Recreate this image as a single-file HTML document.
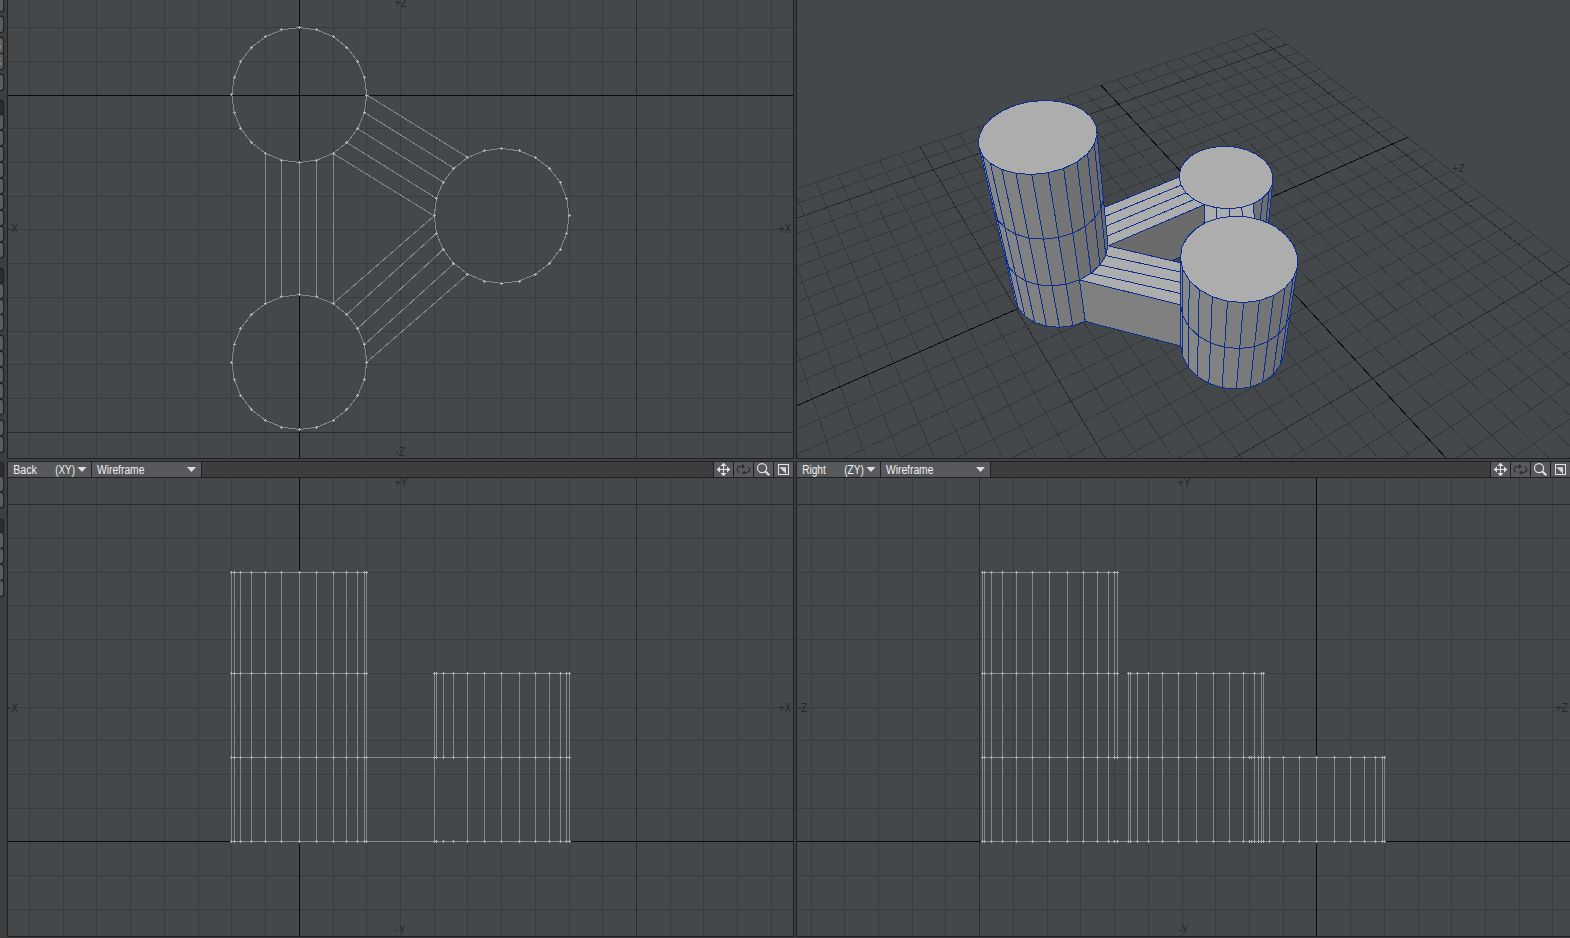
<!DOCTYPE html>
<html><head><meta charset="utf-8"><title>Modeler</title>
<style>
html,body{margin:0;padding:0;}
body{width:1570px;height:938px;overflow:hidden;position:relative;background:#3d3d3f;font-family:"Liberation Sans",sans-serif;}
#strip{position:absolute;left:0;top:0;width:7px;height:938px;background:#3d3e40;overflow:hidden}
</style></head><body>
<div id="strip"><div style="position:absolute;left:-3px;top:-5px;width:6.3px;height:16px;background:#5a5b5e;border-radius:0 2.2px 2.2px 0;box-shadow:0 0 0 1.25px #222324"></div><div style="position:absolute;left:-3px;top:17px;width:6.3px;height:15px;background:#5a5b5e;border-radius:0 2.2px 2.2px 0;box-shadow:0 0 0 1.25px #222324"></div><div style="position:absolute;left:-3px;top:38px;width:6.3px;height:15px;background:#5a5b5e;border-radius:0 2.2px 2.2px 0;box-shadow:0 0 0 1.25px #222324"></div><div style="position:absolute;left:-3px;top:54px;width:6.3px;height:15px;background:#5a5b5e;border-radius:0 2.2px 2.2px 0;box-shadow:0 0 0 1.25px #222324"></div><div style="position:absolute;left:-3px;top:75px;width:6.3px;height:15px;background:#5a5b5e;border-radius:0 2.2px 2.2px 0;box-shadow:0 0 0 1.25px #222324"></div><div style="position:absolute;left:-3px;top:115px;width:6.3px;height:14px;background:#5a5b5e;border-radius:0 2.2px 2.2px 0;box-shadow:0 0 0 1.25px #222324"></div><div style="position:absolute;left:-3px;top:131px;width:6.3px;height:14px;background:#5a5b5e;border-radius:0 2.2px 2.2px 0;box-shadow:0 0 0 1.25px #222324"></div><div style="position:absolute;left:-3px;top:147px;width:6.3px;height:14px;background:#5a5b5e;border-radius:0 2.2px 2.2px 0;box-shadow:0 0 0 1.25px #222324"></div><div style="position:absolute;left:-3px;top:163px;width:6.3px;height:14px;background:#5a5b5e;border-radius:0 2.2px 2.2px 0;box-shadow:0 0 0 1.25px #222324"></div><div style="position:absolute;left:-3px;top:179px;width:6.3px;height:14px;background:#5a5b5e;border-radius:0 2.2px 2.2px 0;box-shadow:0 0 0 1.25px #222324"></div><div style="position:absolute;left:-3px;top:195px;width:6.3px;height:14px;background:#5a5b5e;border-radius:0 2.2px 2.2px 0;box-shadow:0 0 0 1.25px #222324"></div><div style="position:absolute;left:-3px;top:211px;width:6.3px;height:14px;background:#5a5b5e;border-radius:0 2.2px 2.2px 0;box-shadow:0 0 0 1.25px #222324"></div><div style="position:absolute;left:-3px;top:227px;width:6.3px;height:14px;background:#5a5b5e;border-radius:0 2.2px 2.2px 0;box-shadow:0 0 0 1.25px #222324"></div><div style="position:absolute;left:-3px;top:243px;width:6.3px;height:14px;background:#5a5b5e;border-radius:0 2.2px 2.2px 0;box-shadow:0 0 0 1.25px #222324"></div><div style="position:absolute;left:-3px;top:284px;width:6.3px;height:14px;background:#5a5b5e;border-radius:0 2.2px 2.2px 0;box-shadow:0 0 0 1.25px #222324"></div><div style="position:absolute;left:-3px;top:300px;width:6.3px;height:14px;background:#5a5b5e;border-radius:0 2.2px 2.2px 0;box-shadow:0 0 0 1.25px #222324"></div><div style="position:absolute;left:-3px;top:315px;width:6.3px;height:15px;background:#5a5b5e;border-radius:0 2.2px 2.2px 0;box-shadow:0 0 0 1.25px #222324"></div><div style="position:absolute;left:-3px;top:336px;width:6.3px;height:14px;background:#5a5b5e;border-radius:0 2.2px 2.2px 0;box-shadow:0 0 0 1.25px #222324"></div><div style="position:absolute;left:-3px;top:352px;width:6.3px;height:14px;background:#5a5b5e;border-radius:0 2.2px 2.2px 0;box-shadow:0 0 0 1.25px #222324"></div><div style="position:absolute;left:-3px;top:368px;width:6.3px;height:14px;background:#5a5b5e;border-radius:0 2.2px 2.2px 0;box-shadow:0 0 0 1.25px #222324"></div><div style="position:absolute;left:-3px;top:384px;width:6.3px;height:14px;background:#5a5b5e;border-radius:0 2.2px 2.2px 0;box-shadow:0 0 0 1.25px #222324"></div><div style="position:absolute;left:-3px;top:400px;width:6.3px;height:14px;background:#5a5b5e;border-radius:0 2.2px 2.2px 0;box-shadow:0 0 0 1.25px #222324"></div><div style="position:absolute;left:-3px;top:421px;width:6.3px;height:14px;background:#5a5b5e;border-radius:0 2.2px 2.2px 0;box-shadow:0 0 0 1.25px #222324"></div><div style="position:absolute;left:-3px;top:437px;width:6.3px;height:15px;background:#5a5b5e;border-radius:0 2.2px 2.2px 0;box-shadow:0 0 0 1.25px #222324"></div><div style="position:absolute;left:-3px;top:477px;width:6.3px;height:14px;background:#5a5b5e;border-radius:0 2.2px 2.2px 0;box-shadow:0 0 0 1.25px #222324"></div><div style="position:absolute;left:-3px;top:493px;width:6.3px;height:14px;background:#5a5b5e;border-radius:0 2.2px 2.2px 0;box-shadow:0 0 0 1.25px #222324"></div><div style="position:absolute;left:-3px;top:533px;width:6.3px;height:15px;background:#5a5b5e;border-radius:0 2.2px 2.2px 0;box-shadow:0 0 0 1.25px #222324"></div><div style="position:absolute;left:-3px;top:549px;width:6.3px;height:14px;background:#5a5b5e;border-radius:0 2.2px 2.2px 0;box-shadow:0 0 0 1.25px #222324"></div><div style="position:absolute;left:-3px;top:565px;width:6.3px;height:15px;background:#5a5b5e;border-radius:0 2.2px 2.2px 0;box-shadow:0 0 0 1.25px #222324"></div><div style="position:absolute;left:-3px;top:581px;width:6.3px;height:15px;background:#5a5b5e;border-radius:0 2.2px 2.2px 0;box-shadow:0 0 0 1.25px #222324"></div><div style="position:absolute;left:-3px;top:101px;width:6.3px;height:13px;background:#2c2d2f;border-radius:0 2.2px 2.2px 0;box-shadow:0 0 0 1.25px #222324"></div><div style="position:absolute;left:-3px;top:269px;width:6.3px;height:14px;background:#2c2d2f;border-radius:0 2.2px 2.2px 0;box-shadow:0 0 0 1.25px #222324"></div><div style="position:absolute;left:-3px;top:463px;width:6.3px;height:13px;background:#2c2d2f;border-radius:0 2.2px 2.2px 0;box-shadow:0 0 0 1.25px #222324"></div><div style="position:absolute;left:-3px;top:520px;width:6.3px;height:12px;background:#2c2d2f;border-radius:0 2.2px 2.2px 0;box-shadow:0 0 0 1.25px #222324"></div><div style="position:absolute;left:0;top:41px;width:1.2px;height:1px;background:#9f7d5a"></div><div style="position:absolute;left:0;top:45px;width:1.2px;height:4px;background:#9f7d5a"></div><div style="position:absolute;left:0;top:58px;width:1.2px;height:1px;background:#9f7d5a"></div><div style="position:absolute;left:0;top:62px;width:1.2px;height:3px;background:#9f7d5a"></div></div>
<svg width="1570" height="938" viewBox="0 0 1570 938" style="position:absolute;left:0;top:0"><defs><clipPath id="c0"><rect x="8" y="0" width="785" height="458"/></clipPath><clipPath id="c1"><rect x="797" y="0" width="773" height="458"/></clipPath><clipPath id="c2"><rect x="8" y="478" width="785" height="458"/></clipPath><clipPath id="c3"><rect x="797" y="478" width="773" height="458"/></clipPath></defs><rect x="8" y="0" width="785" height="458" fill="#45484b"/><rect x="797" y="0" width="773" height="458" fill="#45484b"/><rect x="8" y="478" width="785" height="458" fill="#45484b"/><rect x="797" y="478" width="773" height="458" fill="#45484b"/><g clip-path="url(#c0)"><path d="M29.5 0V458M63.5 0V458M96.5 0V458M130.5 0V458M164.5 0V458M198.5 0V458M231.5 0V458M265.5 0V458M333.5 0V458M366.5 0V458M400.5 0V458M434.5 0V458M467.5 0V458M501.5 0V458M535.5 0V458M569.5 0V458M602.5 0V458M670.5 0V458M703.5 0V458M737.5 0V458M771.5 0V458M8 27.5H793M8 61.5H793M8 128.5H793M8 162.5H793M8 196.5H793M8 229.5H793M8 263.5H793M8 297.5H793M8 331.5H793M8 364.5H793M8 398.5H793" stroke="#393b3d" stroke-width="1" fill="none" shape-rendering="crispEdges"/><path d="M636.5 0V458M8 432.5H793" stroke="#2a2b2d" stroke-width="1" fill="none" shape-rendering="crispEdges"/><path d="M299.5 0V458M8 95.5H793" stroke="#0c0c0c" stroke-width="1" fill="none" shape-rendering="crispEdges"/><text x="394.74" y="7.4" textLength="12.32" lengthAdjust="spacingAndGlyphs" font-family="Liberation Sans, sans-serif" font-size="12" fill="#27282a">+Z</text><text x="395.43" y="455.8" textLength="9.74" lengthAdjust="spacingAndGlyphs" font-family="Liberation Sans, sans-serif" font-size="12" fill="#27282a">-Z</text><text x="7.84" y="233" textLength="10.32" lengthAdjust="spacingAndGlyphs" font-family="Liberation Sans, sans-serif" font-size="12" fill="#27282a">-X</text><text x="778.55" y="233" textLength="12.90" lengthAdjust="spacingAndGlyphs" font-family="Liberation Sans, sans-serif" font-size="12" fill="#27282a">+X</text><path d="M366.74 362.06L364.44 344.61M364.44 344.61L357.7 328.34M357.7 328.34L346.99 314.38M346.99 314.38L333.02 303.66M333.02 303.66L316.75 296.92M316.75 296.92L299.3 294.62M299.3 294.62L281.85 296.92M281.85 296.92L265.58 303.66M265.58 303.66L251.61 314.38M251.61 314.38L240.9 328.34M240.9 328.34L234.16 344.61M234.16 344.61L231.86 362.06M231.86 362.06L234.16 379.52M234.16 379.52L240.9 395.78M240.9 395.78L251.61 409.75M251.61 409.75L265.58 420.47M265.58 420.47L281.85 427.2M281.85 427.2L299.3 429.5M299.3 429.5L316.75 427.2M316.75 427.2L333.02 420.47M333.02 420.47L346.99 409.75M346.99 409.75L357.7 395.78M357.7 395.78L364.44 379.52M364.44 379.52L366.74 362.06M366.74 95L364.44 77.55M364.44 77.55L357.7 61.28M357.7 61.28L346.99 47.31M346.99 47.31L333.02 36.6M333.02 36.6L316.75 29.86M316.75 29.86L299.3 27.56M299.3 27.56L281.85 29.86M281.85 29.86L265.58 36.6M265.58 36.6L251.61 47.31M251.61 47.31L240.9 61.28M240.9 61.28L234.16 77.55M234.16 77.55L231.86 95M231.86 95L234.16 112.45M234.16 112.45L240.9 128.72M240.9 128.72L251.61 142.69M251.61 142.69L265.58 153.4M265.58 153.4L281.85 160.14M281.85 160.14L299.3 162.44M299.3 162.44L316.75 160.14M316.75 160.14L333.02 153.4M333.02 153.4L346.99 142.69M346.99 142.69L357.7 128.72M357.7 128.72L364.44 112.45M364.44 112.45L366.74 95M569.06 215.89L566.76 198.43M566.76 198.43L560.02 182.17M560.02 182.17L549.31 168.2M549.31 168.2L535.34 157.48M535.34 157.48L519.07 150.74M519.07 150.74L501.62 148.45M501.62 148.45L484.17 150.74M484.17 150.74L467.9 157.48M467.9 157.48L453.93 168.2M453.93 168.2L443.22 182.17M443.22 182.17L436.48 198.43M436.48 198.43L434.18 215.89M434.18 215.89L436.48 233.34M436.48 233.34L443.22 249.61M443.22 249.61L453.93 263.57M453.93 263.57L467.9 274.29M467.9 274.29L484.17 281.03M484.17 281.03L501.62 283.33M501.62 283.33L519.07 281.03M519.07 281.03L535.34 274.29M535.34 274.29L549.31 263.57M549.31 263.57L560.02 249.61M560.02 249.61L566.76 233.34M566.76 233.34L569.06 215.89M265.5 153.5L265.5 303.5M333.02 153.4L434.18 215.89M333.02 303.66L434.18 215.89M281.5 160.5L281.5 296.5M346.99 142.69L436.48 198.43M346.99 314.38L436.48 233.34M299.5 162.5L299.5 294.5M357.7 128.72L443.22 182.17M357.7 328.34L443.22 249.61M316.5 160.5L316.5 296.5M364.44 112.45L453.93 168.2M364.44 344.61L453.93 263.57M333.5 153.5L333.5 303.5M366.74 95L467.9 157.48M366.74 362.06L467.9 274.29" stroke="#858585" stroke-width="1" fill="none" shape-rendering="crispEdges"/><path d="M365.0 362.5h3M366.5 361.0v3M363.0 344.5h3M364.5 343.0v3M356.0 328.5h3M357.5 327.0v3M345.0 314.5h3M346.5 313.0v3M332.0 303.5h3M333.5 302.0v3M315.0 296.5h3M316.5 295.0v3M298.0 294.5h3M299.5 293.0v3M280.0 296.5h3M281.5 295.0v3M264.0 303.5h3M265.5 302.0v3M250.0 314.5h3M251.5 313.0v3M239.0 328.5h3M240.5 327.0v3M233.0 344.5h3M234.5 343.0v3M230.0 362.5h3M231.5 361.0v3M233.0 379.5h3M234.5 378.0v3M239.0 395.5h3M240.5 394.0v3M250.0 409.5h3M251.5 408.0v3M264.0 420.5h3M265.5 419.0v3M280.0 427.5h3M281.5 426.0v3M298.0 429.5h3M299.5 428.0v3M315.0 427.5h3M316.5 426.0v3M332.0 420.5h3M333.5 419.0v3M345.0 409.5h3M346.5 408.0v3M356.0 395.5h3M357.5 394.0v3M363.0 379.5h3M364.5 378.0v3M365.0 95.5h3M366.5 94.0v3M363.0 77.5h3M364.5 76.0v3M356.0 61.5h3M357.5 60.0v3M345.0 47.5h3M346.5 46.0v3M332.0 36.5h3M333.5 35.0v3M315.0 29.5h3M316.5 28.0v3M298.0 27.5h3M299.5 26.0v3M280.0 29.5h3M281.5 28.0v3M264.0 36.5h3M265.5 35.0v3M250.0 47.5h3M251.5 46.0v3M239.0 61.5h3M240.5 60.0v3M233.0 77.5h3M234.5 76.0v3M230.0 94.5h3M231.5 93.0v3M233.0 112.5h3M234.5 111.0v3M239.0 128.5h3M240.5 127.0v3M250.0 142.5h3M251.5 141.0v3M264.0 153.5h3M265.5 152.0v3M280.0 160.5h3M281.5 159.0v3M298.0 162.5h3M299.5 161.0v3M315.0 160.5h3M316.5 159.0v3M332.0 153.5h3M333.5 152.0v3M345.0 142.5h3M346.5 141.0v3M356.0 128.5h3M357.5 127.0v3M363.0 112.5h3M364.5 111.0v3M568.0 215.5h3M569.5 214.0v3M565.0 198.5h3M566.5 197.0v3M559.0 182.5h3M560.5 181.0v3M548.0 168.5h3M549.5 167.0v3M534.0 157.5h3M535.5 156.0v3M518.0 150.5h3M519.5 149.0v3M500.0 148.5h3M501.5 147.0v3M483.0 150.5h3M484.5 149.0v3M466.0 157.5h3M467.5 156.0v3M452.0 168.5h3M453.5 167.0v3M442.0 182.5h3M443.5 181.0v3M435.0 198.5h3M436.5 197.0v3M433.0 215.5h3M434.5 214.0v3M435.0 233.5h3M436.5 232.0v3M442.0 249.5h3M443.5 248.0v3M452.0 263.5h3M453.5 262.0v3M466.0 274.5h3M467.5 273.0v3M483.0 281.5h3M484.5 280.0v3M500.0 283.5h3M501.5 282.0v3M518.0 281.5h3M519.5 280.0v3M534.0 274.5h3M535.5 273.0v3M548.0 263.5h3M549.5 262.0v3M559.0 249.5h3M560.5 248.0v3M565.0 233.5h3M566.5 232.0v3" stroke="#b0b0b0" stroke-width="1" fill="none" shape-rendering="crispEdges"/></g><g clip-path="url(#c1)"><g fill="none" stroke-width="1" shape-rendering="crispEdges"><path d="M432.53 313.53L1266.89 28.26M431.37 330.61L1276.95 36.05M428.9 366.8L1297.86 52.26M427.59 386.01L1308.74 60.7M426.23 406.03L1319.92 69.36M424.8 426.89L1331.41 78.27M423.32 448.67L1343.22 87.42M421.77 471.42L1355.37 96.84M420.15 495.2L1367.88 106.53M418.45 520.1L1380.75 116.51M416.68 546.18L1394 126.78M412.86 602.28L1421.73 148.28M410.8 632.5L1436.25 159.53M408.63 664.31L1451.23 171.14M406.34 697.84L1466.69 183.12M403.93 733.25L1482.66 195.5M401.38 770.69L1499.16 208.29M398.68 810.34L1516.22 221.51M395.81 852.41L1533.87 235.19M392.77 897.11L1552.14 249.35M386.06 995.51L1590.66 279.22M382.36 1049.82L1611 294.98M378.4 1108.03L1632.1 311.33M374.14 1170.58L1654.02 328.32M369.55 1237.96L1676.79 345.97M364.58 1310.77L1700.48 364.33M359.21 1389.68L1725.13 383.44M353.36 1475.5L1750.81 403.34M346.98 1569.17L1777.58 424.09M332.29 1784.82L1834.7 468.36M323.77 1909.8L1865.2 492.01M462.21 303.39L408.72 1831.67M491.22 293.47L488.48 1758.31M519.58 283.77L563.51 1689.29M547.31 274.29L634.23 1624.25M574.43 265.02L700.99 1562.84M600.97 255.94L764.12 1504.77M626.93 247.07L823.9 1449.78M652.35 238.38L880.6 1397.63M677.23 229.87L934.45 1348.1M725.45 213.38L1034.41 1256.16M748.83 205.39L1080.89 1213.41M771.73 197.56L1125.24 1172.62M794.18 189.88L1167.61 1133.65M816.19 182.36L1208.12 1096.38M837.76 174.98L1246.91 1060.71M858.92 167.75L1284.07 1026.53M879.67 160.66L1319.7 993.75M900.02 153.7L1353.91 962.29M939.6 140.17L1418.35 903.02M958.83 133.59L1448.74 875.07M977.72 127.13L1477.99 848.16M996.26 120.79L1506.18 822.23M1014.47 114.57L1533.36 797.23M1032.36 108.45L1559.58 773.11M1049.93 102.44L1584.9 749.83M1067.19 96.54L1609.35 727.34M1084.15 90.74L1632.98 705.6M1117.2 79.44L1677.95 664.24M1133.31 73.93L1699.36 644.55M1149.15 68.52L1720.1 625.47M1164.73 63.19L1740.2 606.99M1180.04 57.96L1759.68 589.06M1195.11 52.8L1778.59 571.67M1209.93 47.74L1796.93 554.8M1224.52 42.75L1814.74 538.42M1238.87 37.84L1832.05 522.5M1266.89 28.26L1865.2 492.01" stroke="#353739"/><path d="M430.16 348.35L1287.27 44.05M389.52 944.71L1571.06 264.02M339.99 1671.83L1805.52 445.75M432.53 313.53L323.77 1909.8M701.59 221.54L985.66 1301M920 146.87L1386.76 932.07M1252.99 33.01L1848.86 507.04" stroke="#28292b"/><path d="M1100.82 85.04L1655.83 684.58M414.81 573.55L1407.66 137.37" stroke="#0c0c0c"/></g><text x="1452" y="171.6" font-family="Liberation Sans, sans-serif" font-size="11" fill="#27282a">+Z</text><g stroke="#0a2f8c" stroke-width="1" stroke-linejoin="round" shape-rendering="crispEdges"><polygon points="1264.71,233.27 1268.13,225.43 1272.63,183.54 1269.07,191.36" fill="#6b6b6b"/><polygon points="1258.37,240.19 1264.71,233.27 1269.07,191.36 1262.43,198.28" fill="#6e6e6e"/><polygon points="1253.11,203.75 1262.43,198.28 1269.07,191.36 1272.63,183.54 1272.94,175.37 1270.1,167.44 1264.37,160.25 1256.22,154.24 1246.2,149.76 1234.97,147.06 1223.21,146.28 1211.63,147.45 1200.93,150.53 1191.79,155.34 1184.8,161.61 1180.46,168.99 1179.14,177.01 1181.04,185.16 1186.11,192.85 1194.09,199.51 1204.46,204.63 1216.47,207.78 1229.24,208.71 1241.77,207.32" fill="#adadad"/><polygon points="1249.51,245.66 1258.37,240.19 1262.43,198.28 1253.11,203.75" fill="#717171"/><polygon points="1179.14,177.01 1181.04,185.16 1094.9,220.57 1085.06,215.24" fill="#adadad"/><polygon points="1203.37,246.54 1204.46,204.63 1108.06,245.81 1112.17,287.59" fill="#6b6b6b"/><polygon points="1181.04,185.16 1186.11,192.85 1102.35,227.74 1094.9,220.57" fill="#adadad"/><polygon points="1203.37,246.54 1204.46,204.63 1205.87,268.74 1204.62,310.34" fill="#888888"/><polygon points="1186.11,192.85 1194.09,199.51 1106.87,236.32 1102.35,227.74" fill="#adadad"/><polygon points="1194.09,199.51 1204.46,204.63 1108.06,245.81 1106.87,236.32" fill="#adadad"/><polygon points="1241.77,207.32 1253.11,203.75 1258.54,267.7 1245.42,264.05" fill="#adadad"/><polygon points="1229.24,208.71 1241.77,207.32 1245.42,264.05 1231.73,262.99" fill="#adadad"/><polygon points="1216.47,207.78 1229.24,208.71 1231.73,262.99 1218.29,264.58" fill="#adadad"/><polygon points="1204.46,204.63 1216.47,207.78 1218.29,264.58 1205.87,268.74" fill="#adadad"/><polygon points="1108.06,245.81 1105.74,255.6 1195.26,275.25 1205.87,268.74" fill="#adadad"/><polygon points="1085.29,321.4 1079.41,279.91 1180.58,304.82 1180.75,346" fill="#808080"/><polygon points="1105.74,255.6 1099.95,265 1187.14,283.78 1195.26,275.25" fill="#adadad"/><polygon points="1099.95,265 1090.98,273.32 1182.1,293.84 1187.14,283.78" fill="#adadad"/><polygon points="1090.98,273.32 1079.41,279.91 1180.58,304.82 1182.1,293.84" fill="#adadad"/><polygon points="1014.85,299.23 1018.35,308.4 1008.61,266.78 1005,257.54" fill="#888888"/><polygon points="1018.35,308.4 1025.1,316.35 1015.67,274.8 1008.61,266.78" fill="#878787"/><polygon points="1025.1,316.35 1034.68,322.46 1025.75,280.98 1015.67,274.8" fill="#848484"/><polygon points="1034.68,322.46 1046.42,326.22 1038.16,284.78 1025.75,280.98" fill="#818181"/><polygon points="1046.42,326.22 1059.43,327.32 1051.95,285.9 1038.16,284.78" fill="#7e7e7e"/><polygon points="1072.73,325.67 1085.29,321.4 1079.41,279.91 1066.06,284.23" fill="#757575"/><polygon points="1059.43,327.32 1072.73,325.67 1066.06,284.23 1051.95,285.9" fill="#7a7a7a"/><polygon points="1005,257.54 1008.61,266.78 997.64,219.94 993.94,210.68" fill="#888888"/><polygon points="1105.74,255.6 1108.06,245.81 1103.46,198.94 1100.94,208.73" fill="#696969"/><polygon points="1008.61,266.78 1015.67,274.8 1005.04,228 997.64,219.94" fill="#878787"/><polygon points="1099.95,265 1105.74,255.6 1100.94,208.73 1094.72,218.16" fill="#6b6b6b"/><polygon points="1015.67,274.8 1025.75,280.98 1015.68,234.2 1005.04,228" fill="#848484"/><polygon points="1090.98,273.32 1099.95,265 1094.72,218.16 1085.13,226.51" fill="#6e6e6e"/><polygon points="1025.75,280.98 1038.16,284.78 1028.84,238.03 1015.68,234.2" fill="#818181"/><polygon points="1079.41,279.91 1090.98,273.32 1085.13,226.51 1072.77,233.13" fill="#717171"/><polygon points="1038.16,284.78 1051.95,285.9 1043.5,239.15 1028.84,238.03" fill="#7e7e7e"/><polygon points="1066.06,284.23 1079.41,279.91 1072.77,233.13 1058.54,237.47" fill="#757575"/><polygon points="1051.95,285.9 1066.06,284.23 1058.54,237.47 1043.5,239.15" fill="#7a7a7a"/><polygon points="993.94,210.68 997.64,219.94 982.52,155.35 978.72,146.16" fill="#888888"/><polygon points="1100.94,208.73 1103.46,198.94 1097.13,134.54 1094.32,144.23" fill="#696969"/><polygon points="997.64,219.94 1005.04,228 990.36,163.36 982.52,155.35" fill="#878787"/><polygon points="1094.72,218.16 1100.94,208.73 1094.32,144.23 1087.51,153.58" fill="#6b6b6b"/><polygon points="1005.04,228 1015.68,234.2 1001.77,169.53 990.36,163.36" fill="#848484"/><polygon points="1063.6,168.47 1077.05,161.88 1087.51,153.58 1094.32,144.23 1097.13,134.54 1095.91,125.17 1090.89,116.72 1082.52,109.69 1071.4,104.47 1058.28,101.32 1043.92,100.41 1029.19,101.78 1014.93,105.36 1002.01,110.97 991.25,118.31 983.39,126.99 979.07,136.48 978.72,146.16 982.52,155.35 990.36,163.36 1001.77,169.53 1015.94,173.35 1031.81,174.47 1048.13,172.79" fill="#adadad"/><polygon points="1085.13,226.51 1094.72,218.16 1087.51,153.58 1077.05,161.88" fill="#6e6e6e"/><polygon points="1015.68,234.2 1028.84,238.03 1015.94,173.35 1001.77,169.53" fill="#818181"/><polygon points="1072.77,233.13 1085.13,226.51 1077.05,161.88 1063.6,168.47" fill="#717171"/><polygon points="1028.84,238.03 1043.5,239.15 1031.81,174.47 1015.94,173.35" fill="#7e7e7e"/><polygon points="1058.54,237.47 1072.77,233.13 1063.6,168.47 1048.13,172.79" fill="#757575"/><polygon points="1043.5,239.15 1058.54,237.47 1048.13,172.79 1031.81,174.47" fill="#7a7a7a"/><polygon points="1180.75,346 1182.86,357.02 1182.82,316 1180.58,304.82" fill="#888888"/><polygon points="1280.14,365.44 1283.94,354.83 1290.2,313.77 1286.23,324.55" fill="#6b6b6b"/><polygon points="1182.86,357.02 1188.49,367.45 1188.8,326.59 1182.82,316" fill="#888888"/><polygon points="1272.9,374.83 1280.14,365.44 1286.23,324.55 1278.6,334.11" fill="#6e6e6e"/><polygon points="1188.49,367.45 1197.34,376.51 1198.22,335.81 1188.8,326.59" fill="#878787"/><polygon points="1262.67,382.27 1272.9,374.83 1278.6,334.11 1267.76,341.68" fill="#717171"/><polygon points="1197.34,376.51 1208.83,383.47 1210.46,342.91 1198.22,335.81" fill="#848484"/><polygon points="1250.16,387.14 1262.67,382.27 1267.76,341.68 1254.47,346.65" fill="#757575"/><polygon points="1208.83,383.47 1222.16,387.77 1224.66,347.29 1210.46,342.91" fill="#818181"/><polygon points="1236.3,389.03 1250.16,387.14 1254.47,346.65 1239.72,348.57" fill="#7a7a7a"/><polygon points="1222.16,387.77 1236.3,389.03 1239.72,348.57 1224.66,347.29" fill="#7e7e7e"/><polygon points="1180.58,304.82 1182.82,316 1182.77,269.51 1180.39,258.22" fill="#888888"/><polygon points="1286.23,324.55 1290.2,313.77 1297.29,267.26 1293.15,278.16" fill="#6b6b6b"/><polygon points="1182.82,316 1188.8,326.59 1189.16,280.23 1182.77,269.51" fill="#888888"/><polygon points="1278.6,334.11 1286.23,324.55 1293.15,278.16 1285.08,287.84" fill="#6e6e6e"/><polygon points="1188.8,326.59 1198.22,335.81 1199.22,289.56 1189.16,280.23" fill="#878787"/><polygon points="1267.76,341.68 1278.6,334.11 1285.08,287.84 1273.55,295.52" fill="#717171"/><polygon points="1273.55,295.52 1285.08,287.84 1293.15,278.16 1297.29,267.26 1297.35,255.95 1293.48,245.02 1286.1,235.16 1275.78,226.96 1263.25,220.87 1249.29,217.2 1234.74,216.14 1220.46,217.73 1207.28,221.91 1196,228.45 1187.37,237.02 1182.01,247.15 1180.39,258.22 1182.77,269.51 1189.16,280.23 1199.22,289.56 1212.32,296.76 1227.5,301.21 1243.61,302.51 1259.37,300.56" fill="#adadad"/><polygon points="1198.22,335.81 1210.46,342.91 1212.32,296.76 1199.22,289.56" fill="#848484"/><polygon points="1254.47,346.65 1267.76,341.68 1273.55,295.52 1259.37,300.56" fill="#757575"/><polygon points="1210.46,342.91 1224.66,347.29 1227.5,301.21 1212.32,296.76" fill="#818181"/><polygon points="1239.72,348.57 1254.47,346.65 1259.37,300.56 1243.61,302.51" fill="#7a7a7a"/><polygon points="1224.66,347.29 1239.72,348.57 1243.61,302.51 1227.5,301.21" fill="#7e7e7e"/></g></g><g clip-path="url(#c2)"><path d="M29.5 478V936M63.5 478V936M96.5 478V936M130.5 478V936M164.5 478V936M198.5 478V936M231.5 478V936M265.5 478V936M333.5 478V936M366.5 478V936M400.5 478V936M434.5 478V936M467.5 478V936M501.5 478V936M535.5 478V936M569.5 478V936M602.5 478V936M670.5 478V936M703.5 478V936M737.5 478V936M771.5 478V936M8 538.5H793M8 572.5H793M8 605.5H793M8 639.5H793M8 673.5H793M8 707.5H793M8 740.5H793M8 774.5H793M8 808.5H793M8 875.5H793M8 909.5H793" stroke="#393b3d" stroke-width="1" fill="none" shape-rendering="crispEdges"/><path d="M636.5 478V936M8 504.5H793" stroke="#2a2b2d" stroke-width="1" fill="none" shape-rendering="crispEdges"/><path d="M299.5 478V936M8 841.5H793" stroke="#0c0c0c" stroke-width="1" fill="none" shape-rendering="crispEdges"/><text x="394.65" y="487.0" textLength="12.90" lengthAdjust="spacingAndGlyphs" font-family="Liberation Sans, sans-serif" font-size="12" fill="#27282a">+Y</text><text x="395.34" y="934" textLength="10.32" lengthAdjust="spacingAndGlyphs" font-family="Liberation Sans, sans-serif" font-size="12" fill="#27282a">-Y</text><text x="7.84" y="712" textLength="10.32" lengthAdjust="spacingAndGlyphs" font-family="Liberation Sans, sans-serif" font-size="12" fill="#27282a">-X</text><text x="778.55" y="712" textLength="12.90" lengthAdjust="spacingAndGlyphs" font-family="Liberation Sans, sans-serif" font-size="12" fill="#27282a">+X</text><path d="M366.5 841.5L364.5 841.5M364.5 841.5L357.5 841.5M357.5 841.5L346.5 841.5M346.5 841.5L333.5 841.5M333.5 841.5L316.5 841.5M316.5 841.5L299.5 841.5M299.5 841.5L281.5 841.5M281.5 841.5L265.5 841.5M265.5 841.5L251.5 841.5M251.5 841.5L240.5 841.5M240.5 841.5L234.5 841.5M234.5 841.5L231.5 841.5M366.5 757.5L364.5 757.5M364.5 757.5L357.5 757.5M357.5 757.5L346.5 757.5M346.5 757.5L333.5 757.5M333.5 757.5L316.5 757.5M316.5 757.5L299.5 757.5M299.5 757.5L281.5 757.5M281.5 757.5L265.5 757.5M265.5 757.5L251.5 757.5M251.5 757.5L240.5 757.5M240.5 757.5L234.5 757.5M234.5 757.5L231.5 757.5M366.5 673.5L364.5 673.5M364.5 673.5L357.5 673.5M357.5 673.5L346.5 673.5M346.5 673.5L333.5 673.5M333.5 673.5L316.5 673.5M316.5 673.5L299.5 673.5M299.5 673.5L281.5 673.5M281.5 673.5L265.5 673.5M265.5 673.5L251.5 673.5M251.5 673.5L240.5 673.5M240.5 673.5L234.5 673.5M234.5 673.5L231.5 673.5M366.5 572.5L364.5 572.5M364.5 572.5L357.5 572.5M357.5 572.5L346.5 572.5M346.5 572.5L333.5 572.5M333.5 572.5L316.5 572.5M316.5 572.5L299.5 572.5M299.5 572.5L281.5 572.5M281.5 572.5L265.5 572.5M265.5 572.5L251.5 572.5M251.5 572.5L240.5 572.5M240.5 572.5L234.5 572.5M234.5 572.5L231.5 572.5M366.5 841.5L366.5 757.5M366.5 757.5L366.5 673.5M366.5 673.5L366.5 572.5M364.5 757.5L364.5 673.5M364.5 673.5L364.5 572.5M357.5 757.5L357.5 673.5M357.5 673.5L357.5 572.5M346.5 757.5L346.5 673.5M346.5 673.5L346.5 572.5M333.5 841.5L333.5 757.5M333.5 757.5L333.5 673.5M333.5 673.5L333.5 572.5M316.5 757.5L316.5 673.5M316.5 673.5L316.5 572.5M299.5 757.5L299.5 673.5M299.5 673.5L299.5 572.5M281.5 757.5L281.5 673.5M281.5 673.5L281.5 572.5M265.5 841.5L265.5 757.5M265.5 757.5L265.5 673.5M265.5 673.5L265.5 572.5M251.5 841.5L251.5 757.5M251.5 757.5L251.5 673.5M251.5 673.5L251.5 572.5M240.5 841.5L240.5 757.5M240.5 757.5L240.5 673.5M240.5 673.5L240.5 572.5M234.5 841.5L234.5 757.5M234.5 757.5L234.5 673.5M234.5 673.5L234.5 572.5M231.5 841.5L231.5 757.5M231.5 757.5L231.5 673.5M231.5 673.5L231.5 572.5M281.5 841.5L281.5 757.5M299.5 841.5L299.5 757.5M316.5 841.5L316.5 757.5M346.5 841.5L346.5 757.5M357.5 841.5L357.5 757.5M364.5 841.5L364.5 757.5M569.5 841.5L566.5 841.5M566.5 841.5L560.5 841.5M560.5 841.5L549.5 841.5M549.5 841.5L535.5 841.5M535.5 841.5L519.5 841.5M519.5 841.5L501.5 841.5M501.5 841.5L484.5 841.5M484.5 841.5L467.5 841.5M467.5 841.5L453.5 841.5M453.5 841.5L443.5 841.5M443.5 841.5L436.5 841.5M436.5 841.5L434.5 841.5M569.5 757.5L566.5 757.5M566.5 757.5L560.5 757.5M560.5 757.5L549.5 757.5M549.5 757.5L535.5 757.5M535.5 757.5L519.5 757.5M519.5 757.5L501.5 757.5M501.5 757.5L484.5 757.5M484.5 757.5L467.5 757.5M467.5 757.5L453.5 757.5M453.5 757.5L443.5 757.5M443.5 757.5L436.5 757.5M436.5 757.5L434.5 757.5M569.5 673.5L566.5 673.5M566.5 673.5L560.5 673.5M560.5 673.5L549.5 673.5M549.5 673.5L535.5 673.5M535.5 673.5L519.5 673.5M519.5 673.5L501.5 673.5M501.5 673.5L484.5 673.5M484.5 673.5L467.5 673.5M467.5 673.5L453.5 673.5M453.5 673.5L443.5 673.5M443.5 673.5L436.5 673.5M436.5 673.5L434.5 673.5M569.5 841.5L569.5 757.5M569.5 757.5L569.5 673.5M566.5 841.5L566.5 757.5M566.5 757.5L566.5 673.5M560.5 841.5L560.5 757.5M560.5 757.5L560.5 673.5M549.5 841.5L549.5 757.5M549.5 757.5L549.5 673.5M535.5 841.5L535.5 757.5M535.5 757.5L535.5 673.5M519.5 841.5L519.5 757.5M519.5 757.5L519.5 673.5M501.5 841.5L501.5 757.5M501.5 757.5L501.5 673.5M484.5 841.5L484.5 757.5M484.5 757.5L484.5 673.5M467.5 841.5L467.5 757.5M467.5 757.5L467.5 673.5M453.5 757.5L453.5 673.5M443.5 757.5L443.5 673.5M436.5 757.5L436.5 673.5M434.5 841.5L434.5 757.5M434.5 757.5L434.5 673.5M333.5 841.5L434.5 841.5M333.5 757.5L434.5 757.5M346.5 841.5L436.5 841.5M346.5 757.5L436.5 757.5M357.5 841.5L443.5 841.5M357.5 757.5L443.5 757.5M364.5 841.5L453.5 841.5M364.5 757.5L453.5 757.5M366.5 841.5L467.5 841.5M366.5 757.5L467.5 757.5" stroke="#858585" stroke-width="1" fill="none" shape-rendering="crispEdges"/><path d="M365.0 841.5h3M366.5 840.0v3M363.0 841.5h3M364.5 840.0v3M356.0 841.5h3M357.5 840.0v3M345.0 841.5h3M346.5 840.0v3M332.0 841.5h3M333.5 840.0v3M315.0 841.5h3M316.5 840.0v3M298.0 841.5h3M299.5 840.0v3M280.0 841.5h3M281.5 840.0v3M264.0 841.5h3M265.5 840.0v3M250.0 841.5h3M251.5 840.0v3M239.0 841.5h3M240.5 840.0v3M233.0 841.5h3M234.5 840.0v3M230.0 841.5h3M231.5 840.0v3M365.0 757.5h3M366.5 756.0v3M363.0 757.5h3M364.5 756.0v3M356.0 757.5h3M357.5 756.0v3M345.0 757.5h3M346.5 756.0v3M332.0 757.5h3M333.5 756.0v3M315.0 757.5h3M316.5 756.0v3M298.0 757.5h3M299.5 756.0v3M280.0 757.5h3M281.5 756.0v3M264.0 757.5h3M265.5 756.0v3M250.0 757.5h3M251.5 756.0v3M239.0 757.5h3M240.5 756.0v3M233.0 757.5h3M234.5 756.0v3M230.0 757.5h3M231.5 756.0v3M365.0 673.5h3M366.5 672.0v3M363.0 673.5h3M364.5 672.0v3M356.0 673.5h3M357.5 672.0v3M345.0 673.5h3M346.5 672.0v3M332.0 673.5h3M333.5 672.0v3M315.0 673.5h3M316.5 672.0v3M298.0 673.5h3M299.5 672.0v3M280.0 673.5h3M281.5 672.0v3M264.0 673.5h3M265.5 672.0v3M250.0 673.5h3M251.5 672.0v3M239.0 673.5h3M240.5 672.0v3M233.0 673.5h3M234.5 672.0v3M230.0 673.5h3M231.5 672.0v3M365.0 572.5h3M366.5 571.0v3M363.0 572.5h3M364.5 571.0v3M356.0 572.5h3M357.5 571.0v3M345.0 572.5h3M346.5 571.0v3M332.0 572.5h3M333.5 571.0v3M315.0 572.5h3M316.5 571.0v3M298.0 572.5h3M299.5 571.0v3M280.0 572.5h3M281.5 571.0v3M264.0 572.5h3M265.5 571.0v3M250.0 572.5h3M251.5 571.0v3M239.0 572.5h3M240.5 571.0v3M233.0 572.5h3M234.5 571.0v3M230.0 572.5h3M231.5 571.0v3M568.0 841.5h3M569.5 840.0v3M565.0 841.5h3M566.5 840.0v3M559.0 841.5h3M560.5 840.0v3M548.0 841.5h3M549.5 840.0v3M534.0 841.5h3M535.5 840.0v3M518.0 841.5h3M519.5 840.0v3M500.0 841.5h3M501.5 840.0v3M483.0 841.5h3M484.5 840.0v3M466.0 841.5h3M467.5 840.0v3M452.0 841.5h3M453.5 840.0v3M442.0 841.5h3M443.5 840.0v3M435.0 841.5h3M436.5 840.0v3M433.0 841.5h3M434.5 840.0v3M568.0 757.5h3M569.5 756.0v3M565.0 757.5h3M566.5 756.0v3M559.0 757.5h3M560.5 756.0v3M548.0 757.5h3M549.5 756.0v3M534.0 757.5h3M535.5 756.0v3M518.0 757.5h3M519.5 756.0v3M500.0 757.5h3M501.5 756.0v3M483.0 757.5h3M484.5 756.0v3M466.0 757.5h3M467.5 756.0v3M452.0 757.5h3M453.5 756.0v3M442.0 757.5h3M443.5 756.0v3M435.0 757.5h3M436.5 756.0v3M433.0 757.5h3M434.5 756.0v3M568.0 673.5h3M569.5 672.0v3M565.0 673.5h3M566.5 672.0v3M559.0 673.5h3M560.5 672.0v3M548.0 673.5h3M549.5 672.0v3M534.0 673.5h3M535.5 672.0v3M518.0 673.5h3M519.5 672.0v3M500.0 673.5h3M501.5 672.0v3M483.0 673.5h3M484.5 672.0v3M466.0 673.5h3M467.5 672.0v3M452.0 673.5h3M453.5 672.0v3M442.0 673.5h3M443.5 672.0v3M435.0 673.5h3M436.5 672.0v3M433.0 673.5h3M434.5 672.0v3" stroke="#b0b0b0" stroke-width="1" fill="none" shape-rendering="crispEdges"/></g><g clip-path="url(#c3)"><path d="M811.5 478V936M844.5 478V936M878.5 478V936M912.5 478V936M945.5 478V936M1013.5 478V936M1047.5 478V936M1080.5 478V936M1114.5 478V936M1148.5 478V936M1182.5 478V936M1215.5 478V936M1249.5 478V936M1283.5 478V936M1350.5 478V936M1384.5 478V936M1418.5 478V936M1451.5 478V936M1485.5 478V936M1519.5 478V936M1552.5 478V936M797 538.5H1570M797 572.5H1570M797 605.5H1570M797 639.5H1570M797 673.5H1570M797 707.5H1570M797 740.5H1570M797 774.5H1570M797 808.5H1570M797 875.5H1570M797 909.5H1570" stroke="#393b3d" stroke-width="1" fill="none" shape-rendering="crispEdges"/><path d="M979.5 478V936M797 504.5H1570" stroke="#2a2b2d" stroke-width="1" fill="none" shape-rendering="crispEdges"/><path d="M1316.5 478V936M797 841.5H1570" stroke="#0c0c0c" stroke-width="1" fill="none" shape-rendering="crispEdges"/><text x="1177.65" y="487.0" textLength="12.90" lengthAdjust="spacingAndGlyphs" font-family="Liberation Sans, sans-serif" font-size="12" fill="#27282a">+Y</text><text x="1178.34" y="934" textLength="10.32" lengthAdjust="spacingAndGlyphs" font-family="Liberation Sans, sans-serif" font-size="12" fill="#27282a">-Y</text><text x="797.53" y="712" textLength="9.74" lengthAdjust="spacingAndGlyphs" font-family="Liberation Sans, sans-serif" font-size="12" fill="#27282a">-Z</text><text x="1555.74" y="712" textLength="12.32" lengthAdjust="spacingAndGlyphs" font-family="Liberation Sans, sans-serif" font-size="12" fill="#27282a">+Z</text><path d="M1049.5 841.5L1067.5 841.5M1067.5 841.5L1083.5 841.5M1083.5 841.5L1097.5 841.5M1097.5 841.5L1108.5 841.5M1108.5 841.5L1114.5 841.5M1114.5 841.5L1117.5 841.5M1049.5 841.5L1032.5 841.5M1032.5 841.5L1016.5 841.5M1016.5 841.5L1002.5 841.5M1002.5 841.5L991.5 841.5M991.5 841.5L984.5 841.5M984.5 841.5L982.5 841.5M1049.5 757.5L1067.5 757.5M1067.5 757.5L1083.5 757.5M1083.5 757.5L1097.5 757.5M1097.5 757.5L1108.5 757.5M1108.5 757.5L1114.5 757.5M1114.5 757.5L1117.5 757.5M1049.5 757.5L1032.5 757.5M1032.5 757.5L1016.5 757.5M1016.5 757.5L1002.5 757.5M1002.5 757.5L991.5 757.5M991.5 757.5L984.5 757.5M984.5 757.5L982.5 757.5M1049.5 673.5L1067.5 673.5M1067.5 673.5L1083.5 673.5M1083.5 673.5L1097.5 673.5M1097.5 673.5L1108.5 673.5M1108.5 673.5L1114.5 673.5M1114.5 673.5L1117.5 673.5M1049.5 673.5L1032.5 673.5M1032.5 673.5L1016.5 673.5M1016.5 673.5L1002.5 673.5M1002.5 673.5L991.5 673.5M991.5 673.5L984.5 673.5M984.5 673.5L982.5 673.5M1049.5 572.5L1067.5 572.5M1067.5 572.5L1083.5 572.5M1083.5 572.5L1097.5 572.5M1097.5 572.5L1108.5 572.5M1108.5 572.5L1114.5 572.5M1114.5 572.5L1117.5 572.5M1049.5 572.5L1032.5 572.5M1032.5 572.5L1016.5 572.5M1016.5 572.5L1002.5 572.5M1002.5 572.5L991.5 572.5M991.5 572.5L984.5 572.5M984.5 572.5L982.5 572.5M1049.5 841.5L1049.5 757.5M1049.5 757.5L1049.5 673.5M1049.5 673.5L1049.5 572.5M1067.5 757.5L1067.5 673.5M1067.5 673.5L1067.5 572.5M1083.5 757.5L1083.5 673.5M1083.5 673.5L1083.5 572.5M1097.5 757.5L1097.5 673.5M1097.5 673.5L1097.5 572.5M1108.5 841.5L1108.5 757.5M1108.5 757.5L1108.5 673.5M1108.5 673.5L1108.5 572.5M1114.5 757.5L1114.5 673.5M1114.5 673.5L1114.5 572.5M1117.5 757.5L1117.5 673.5M1117.5 673.5L1117.5 572.5M1097.5 841.5L1097.5 757.5M1083.5 841.5L1083.5 757.5M1067.5 841.5L1067.5 757.5M1032.5 841.5L1032.5 757.5M1032.5 757.5L1032.5 673.5M1032.5 673.5L1032.5 572.5M1016.5 841.5L1016.5 757.5M1016.5 757.5L1016.5 673.5M1016.5 673.5L1016.5 572.5M1002.5 841.5L1002.5 757.5M1002.5 757.5L1002.5 673.5M1002.5 673.5L1002.5 572.5M991.5 841.5L991.5 757.5M991.5 757.5L991.5 673.5M991.5 673.5L991.5 572.5M984.5 841.5L984.5 757.5M984.5 757.5L984.5 673.5M984.5 673.5L984.5 572.5M982.5 841.5L982.5 757.5M982.5 757.5L982.5 673.5M982.5 673.5L982.5 572.5M1316.5 841.5L1334.5 841.5M1334.5 841.5L1350.5 841.5M1350.5 841.5L1364.5 841.5M1364.5 841.5L1375.5 841.5M1375.5 841.5L1382.5 841.5M1382.5 841.5L1384.5 841.5M1316.5 841.5L1299.5 841.5M1299.5 841.5L1283.5 841.5M1283.5 841.5L1269.5 841.5M1269.5 841.5L1258.5 841.5M1258.5 841.5L1251.5 841.5M1251.5 841.5L1249.5 841.5M1316.5 757.5L1334.5 757.5M1334.5 757.5L1350.5 757.5M1350.5 757.5L1364.5 757.5M1364.5 757.5L1375.5 757.5M1375.5 757.5L1382.5 757.5M1382.5 757.5L1384.5 757.5M1316.5 757.5L1299.5 757.5M1299.5 757.5L1283.5 757.5M1283.5 757.5L1269.5 757.5M1269.5 757.5L1258.5 757.5M1258.5 757.5L1251.5 757.5M1251.5 757.5L1249.5 757.5M1316.5 841.5L1316.5 757.5M1334.5 841.5L1334.5 757.5M1350.5 841.5L1350.5 757.5M1364.5 841.5L1364.5 757.5M1375.5 841.5L1375.5 757.5M1382.5 841.5L1382.5 757.5M1384.5 841.5L1384.5 757.5M1299.5 841.5L1299.5 757.5M1283.5 841.5L1283.5 757.5M1269.5 841.5L1269.5 757.5M1258.5 841.5L1258.5 757.5M1196.5 841.5L1213.5 841.5M1213.5 841.5L1229.5 841.5M1229.5 841.5L1243.5 841.5M1243.5 841.5L1254.5 841.5M1254.5 841.5L1261.5 841.5M1261.5 841.5L1263.5 841.5M1196.5 841.5L1178.5 841.5M1178.5 841.5L1162.5 841.5M1162.5 841.5L1148.5 841.5M1148.5 841.5L1137.5 841.5M1137.5 841.5L1130.5 841.5M1130.5 841.5L1128.5 841.5M1196.5 757.5L1213.5 757.5M1213.5 757.5L1229.5 757.5M1229.5 757.5L1243.5 757.5M1243.5 757.5L1254.5 757.5M1254.5 757.5L1261.5 757.5M1261.5 757.5L1263.5 757.5M1196.5 757.5L1178.5 757.5M1178.5 757.5L1162.5 757.5M1162.5 757.5L1148.5 757.5M1148.5 757.5L1137.5 757.5M1137.5 757.5L1130.5 757.5M1130.5 757.5L1128.5 757.5M1196.5 673.5L1213.5 673.5M1213.5 673.5L1229.5 673.5M1229.5 673.5L1243.5 673.5M1243.5 673.5L1254.5 673.5M1254.5 673.5L1261.5 673.5M1261.5 673.5L1263.5 673.5M1196.5 673.5L1178.5 673.5M1178.5 673.5L1162.5 673.5M1162.5 673.5L1148.5 673.5M1148.5 673.5L1137.5 673.5M1137.5 673.5L1130.5 673.5M1130.5 673.5L1128.5 673.5M1196.5 841.5L1196.5 757.5M1196.5 757.5L1196.5 673.5M1213.5 841.5L1213.5 757.5M1213.5 757.5L1213.5 673.5M1229.5 841.5L1229.5 757.5M1229.5 757.5L1229.5 673.5M1243.5 841.5L1243.5 757.5M1243.5 757.5L1243.5 673.5M1254.5 841.5L1254.5 757.5M1254.5 757.5L1254.5 673.5M1261.5 841.5L1261.5 757.5M1261.5 757.5L1261.5 673.5M1263.5 841.5L1263.5 757.5M1263.5 757.5L1263.5 673.5M1178.5 757.5L1178.5 673.5M1162.5 757.5L1162.5 673.5M1148.5 757.5L1148.5 673.5M1137.5 841.5L1137.5 757.5M1137.5 757.5L1137.5 673.5M1130.5 841.5L1130.5 757.5M1130.5 757.5L1130.5 673.5M1128.5 841.5L1128.5 757.5M1128.5 757.5L1128.5 673.5M1148.5 841.5L1148.5 757.5M1162.5 841.5L1162.5 757.5M1178.5 841.5L1178.5 757.5M1258.5 841.5L1108.5 841.5M1258.5 841.5L1196.5 841.5M1108.5 841.5L1196.5 841.5M1258.5 757.5L1108.5 757.5M1258.5 757.5L1196.5 757.5M1108.5 757.5L1196.5 757.5M1251.5 841.5L1114.5 841.5M1269.5 841.5L1213.5 841.5M1097.5 841.5L1178.5 841.5M1251.5 757.5L1114.5 757.5M1269.5 757.5L1213.5 757.5M1097.5 757.5L1178.5 757.5M1249.5 841.5L1117.5 841.5M1283.5 841.5L1229.5 841.5M1083.5 841.5L1162.5 841.5M1249.5 757.5L1117.5 757.5M1283.5 757.5L1229.5 757.5M1083.5 757.5L1162.5 757.5M1299.5 841.5L1243.5 841.5M1067.5 841.5L1148.5 841.5M1299.5 757.5L1243.5 757.5M1067.5 757.5L1148.5 757.5M1316.5 841.5L1254.5 841.5M1049.5 841.5L1137.5 841.5M1316.5 757.5L1254.5 757.5M1049.5 757.5L1137.5 757.5" stroke="#858585" stroke-width="1" fill="none" shape-rendering="crispEdges"/><path d="M1048.0 841.5h3M1049.5 840.0v3M1066.0 841.5h3M1067.5 840.0v3M1082.0 841.5h3M1083.5 840.0v3M1096.0 841.5h3M1097.5 840.0v3M1107.0 841.5h3M1108.5 840.0v3M1113.0 841.5h3M1114.5 840.0v3M1116.0 841.5h3M1117.5 840.0v3M1031.0 841.5h3M1032.5 840.0v3M1015.0 841.5h3M1016.5 840.0v3M1001.0 841.5h3M1002.5 840.0v3M990.0 841.5h3M991.5 840.0v3M983.0 841.5h3M984.5 840.0v3M981.0 841.5h3M982.5 840.0v3M1048.0 757.5h3M1049.5 756.0v3M1066.0 757.5h3M1067.5 756.0v3M1082.0 757.5h3M1083.5 756.0v3M1096.0 757.5h3M1097.5 756.0v3M1107.0 757.5h3M1108.5 756.0v3M1113.0 757.5h3M1114.5 756.0v3M1116.0 757.5h3M1117.5 756.0v3M1031.0 757.5h3M1032.5 756.0v3M1015.0 757.5h3M1016.5 756.0v3M1001.0 757.5h3M1002.5 756.0v3M990.0 757.5h3M991.5 756.0v3M983.0 757.5h3M984.5 756.0v3M981.0 757.5h3M982.5 756.0v3M1048.0 673.5h3M1049.5 672.0v3M1066.0 673.5h3M1067.5 672.0v3M1082.0 673.5h3M1083.5 672.0v3M1096.0 673.5h3M1097.5 672.0v3M1107.0 673.5h3M1108.5 672.0v3M1113.0 673.5h3M1114.5 672.0v3M1116.0 673.5h3M1117.5 672.0v3M1031.0 673.5h3M1032.5 672.0v3M1015.0 673.5h3M1016.5 672.0v3M1001.0 673.5h3M1002.5 672.0v3M990.0 673.5h3M991.5 672.0v3M983.0 673.5h3M984.5 672.0v3M981.0 673.5h3M982.5 672.0v3M1048.0 572.5h3M1049.5 571.0v3M1066.0 572.5h3M1067.5 571.0v3M1082.0 572.5h3M1083.5 571.0v3M1096.0 572.5h3M1097.5 571.0v3M1107.0 572.5h3M1108.5 571.0v3M1113.0 572.5h3M1114.5 571.0v3M1116.0 572.5h3M1117.5 571.0v3M1031.0 572.5h3M1032.5 571.0v3M1015.0 572.5h3M1016.5 571.0v3M1001.0 572.5h3M1002.5 571.0v3M990.0 572.5h3M991.5 571.0v3M983.0 572.5h3M984.5 571.0v3M981.0 572.5h3M982.5 571.0v3M1315.0 841.5h3M1316.5 840.0v3M1333.0 841.5h3M1334.5 840.0v3M1349.0 841.5h3M1350.5 840.0v3M1363.0 841.5h3M1364.5 840.0v3M1374.0 841.5h3M1375.5 840.0v3M1381.0 841.5h3M1382.5 840.0v3M1383.0 841.5h3M1384.5 840.0v3M1298.0 841.5h3M1299.5 840.0v3M1282.0 841.5h3M1283.5 840.0v3M1268.0 841.5h3M1269.5 840.0v3M1257.0 841.5h3M1258.5 840.0v3M1250.0 841.5h3M1251.5 840.0v3M1248.0 841.5h3M1249.5 840.0v3M1315.0 757.5h3M1316.5 756.0v3M1333.0 757.5h3M1334.5 756.0v3M1349.0 757.5h3M1350.5 756.0v3M1363.0 757.5h3M1364.5 756.0v3M1374.0 757.5h3M1375.5 756.0v3M1381.0 757.5h3M1382.5 756.0v3M1383.0 757.5h3M1384.5 756.0v3M1298.0 757.5h3M1299.5 756.0v3M1282.0 757.5h3M1283.5 756.0v3M1268.0 757.5h3M1269.5 756.0v3M1257.0 757.5h3M1258.5 756.0v3M1250.0 757.5h3M1251.5 756.0v3M1248.0 757.5h3M1249.5 756.0v3M1195.0 841.5h3M1196.5 840.0v3M1212.0 841.5h3M1213.5 840.0v3M1228.0 841.5h3M1229.5 840.0v3M1242.0 841.5h3M1243.5 840.0v3M1253.0 841.5h3M1254.5 840.0v3M1260.0 841.5h3M1261.5 840.0v3M1262.0 841.5h3M1263.5 840.0v3M1177.0 841.5h3M1178.5 840.0v3M1161.0 841.5h3M1162.5 840.0v3M1147.0 841.5h3M1148.5 840.0v3M1136.0 841.5h3M1137.5 840.0v3M1129.0 841.5h3M1130.5 840.0v3M1127.0 841.5h3M1128.5 840.0v3M1195.0 757.5h3M1196.5 756.0v3M1212.0 757.5h3M1213.5 756.0v3M1228.0 757.5h3M1229.5 756.0v3M1242.0 757.5h3M1243.5 756.0v3M1253.0 757.5h3M1254.5 756.0v3M1260.0 757.5h3M1261.5 756.0v3M1262.0 757.5h3M1263.5 756.0v3M1177.0 757.5h3M1178.5 756.0v3M1161.0 757.5h3M1162.5 756.0v3M1147.0 757.5h3M1148.5 756.0v3M1136.0 757.5h3M1137.5 756.0v3M1129.0 757.5h3M1130.5 756.0v3M1127.0 757.5h3M1128.5 756.0v3M1195.0 673.5h3M1196.5 672.0v3M1212.0 673.5h3M1213.5 672.0v3M1228.0 673.5h3M1229.5 672.0v3M1242.0 673.5h3M1243.5 672.0v3M1253.0 673.5h3M1254.5 672.0v3M1260.0 673.5h3M1261.5 672.0v3M1262.0 673.5h3M1263.5 672.0v3M1177.0 673.5h3M1178.5 672.0v3M1161.0 673.5h3M1162.5 672.0v3M1147.0 673.5h3M1148.5 672.0v3M1136.0 673.5h3M1137.5 672.0v3M1129.0 673.5h3M1130.5 672.0v3M1127.0 673.5h3M1128.5 672.0v3" stroke="#b0b0b0" stroke-width="1" fill="none" shape-rendering="crispEdges"/></g><rect x="7.5" y="-0.5" width="786" height="459" fill="none" stroke="#202122" stroke-width="1" shape-rendering="crispEdges"/><rect x="796.5" y="-0.5" width="774" height="459" fill="none" stroke="#202122" stroke-width="1" shape-rendering="crispEdges"/><rect x="7.5" y="477.5" width="786" height="459" fill="none" stroke="#202122" stroke-width="1" shape-rendering="crispEdges"/><rect x="796.5" y="477.5" width="774" height="459" fill="none" stroke="#202122" stroke-width="1" shape-rendering="crispEdges"/><rect x="7" y="459" width="787" height="2" fill="#414244"/><rect x="7.5" y="461.5" width="786" height="16" fill="#3d3d3f" stroke="#202122" shape-rendering="crispEdges"/><rect x="796" y="459" width="775" height="2" fill="#414244"/><rect x="796.5" y="461.5" width="774" height="16" fill="#3d3d3f" stroke="#202122" shape-rendering="crispEdges"/><rect x="8" y="462" width="83" height="15" fill="#58595c" shape-rendering="crispEdges"/><rect x="7.5" y="461.5" width="84" height="16" fill="none" stroke="#202122" shape-rendering="crispEdges"/><rect x="92" y="462" width="109" height="15" fill="#58595c" shape-rendering="crispEdges"/><rect x="91.5" y="461.5" width="110" height="16" fill="none" stroke="#202122" shape-rendering="crispEdges"/><text x="13.2" y="473.9" font-family="Liberation Sans, sans-serif" font-size="12" fill="#f0f0f0" textLength="23.6" lengthAdjust="spacingAndGlyphs">Back</text><text x="55.2" y="473.9" font-family="Liberation Sans, sans-serif" font-size="12" fill="#f0f0f0" textLength="19.8" lengthAdjust="spacingAndGlyphs">(XY)</text><text x="97" y="473.9" font-family="Liberation Sans, sans-serif" font-size="12" fill="#f0f0f0" textLength="47.4" lengthAdjust="spacingAndGlyphs">Wireframe</text><path d="M77.5 467h9l-4.5 5z" fill="#dedede"/><path d="M187.0 467h9l-4.5 5z" fill="#dedede"/><rect x="714" y="462" width="19" height="15" fill="#58595c" shape-rendering="crispEdges"/><rect x="713.5" y="461.5" width="20" height="16" fill="none" stroke="#202122" shape-rendering="crispEdges"/><rect x="734" y="462" width="19" height="15" fill="#58595c" shape-rendering="crispEdges"/><rect x="733.5" y="461.5" width="20" height="16" fill="none" stroke="#202122" shape-rendering="crispEdges"/><rect x="754" y="462" width="19" height="15" fill="#58595c" shape-rendering="crispEdges"/><rect x="753.5" y="461.5" width="20" height="16" fill="none" stroke="#202122" shape-rendering="crispEdges"/><rect x="774" y="462" width="19" height="15" fill="#58595c" shape-rendering="crispEdges"/><rect x="773.5" y="461.5" width="20" height="16" fill="none" stroke="#202122" shape-rendering="crispEdges"/><g fill="#e2e2e2" stroke="none"><rect x="723.0" y="464.5" width="1" height="10"/><rect x="718.5" y="469.0" width="10" height="1"/><path d="M723.5 462.7l3 3.3h-6zM723.5 476.3l3 -3.3h-6zM716.7 469.5l3.3 -3v6zM730.3 469.5l-3.3 -3v6z"/></g><g fill="none" stroke="#2a2a2e" stroke-width="1.25" stroke-linecap="round" stroke-dasharray="1.7 1.0"><path d="M741.6 466.5H740C737.4 466.6 737 468.6 737.3 470.2C737.5 471 738 471.5 738.6 471.9"/><path d="M748.3 467.2C750.2 468.3 750.2 470.6 748.4 471.6C747.5 472.3 746.5 472.7 745 472.7"/></g><path d="M742 464.1L745 466.4L742 468.7z" fill="#2a2a2e"/><path d="M744.8 470.4L741.9 472.7L744.8 475z" fill="#2a2a2e"/><circle cx="762.05" cy="468.1" r="4.55" fill="none" stroke="#e4e4e4" stroke-width="1.15"/><path d="M765.2 471.2l4.1 4.1" stroke="#e0e0e0" stroke-width="2.1" fill="none"/><rect x="778.5" y="464.5" width="10" height="10" fill="none" stroke="#e2e2e2" stroke-width="1" shape-rendering="crispEdges"/><path d="M779.2 467.2H786V473.8z" fill="#d6d6d6"/><rect x="797" y="462" width="83" height="15" fill="#58595c" shape-rendering="crispEdges"/><rect x="796.5" y="461.5" width="84" height="16" fill="none" stroke="#202122" shape-rendering="crispEdges"/><rect x="881" y="462" width="109" height="15" fill="#58595c" shape-rendering="crispEdges"/><rect x="880.5" y="461.5" width="110" height="16" fill="none" stroke="#202122" shape-rendering="crispEdges"/><text x="802.2" y="473.9" font-family="Liberation Sans, sans-serif" font-size="12" fill="#f0f0f0" textLength="23.6" lengthAdjust="spacingAndGlyphs">Right</text><text x="844.2" y="473.9" font-family="Liberation Sans, sans-serif" font-size="12" fill="#f0f0f0" textLength="19.8" lengthAdjust="spacingAndGlyphs">(ZY)</text><text x="886" y="473.9" font-family="Liberation Sans, sans-serif" font-size="12" fill="#f0f0f0" textLength="47.4" lengthAdjust="spacingAndGlyphs">Wireframe</text><path d="M866.5 467h9l-4.5 5z" fill="#dedede"/><path d="M976.0 467h9l-4.5 5z" fill="#dedede"/><rect x="1491" y="462" width="19" height="15" fill="#58595c" shape-rendering="crispEdges"/><rect x="1490.5" y="461.5" width="20" height="16" fill="none" stroke="#202122" shape-rendering="crispEdges"/><rect x="1511" y="462" width="19" height="15" fill="#58595c" shape-rendering="crispEdges"/><rect x="1510.5" y="461.5" width="20" height="16" fill="none" stroke="#202122" shape-rendering="crispEdges"/><rect x="1531" y="462" width="19" height="15" fill="#58595c" shape-rendering="crispEdges"/><rect x="1530.5" y="461.5" width="20" height="16" fill="none" stroke="#202122" shape-rendering="crispEdges"/><rect x="1551" y="462" width="19" height="15" fill="#58595c" shape-rendering="crispEdges"/><rect x="1550.5" y="461.5" width="20" height="16" fill="none" stroke="#202122" shape-rendering="crispEdges"/><g fill="#e2e2e2" stroke="none"><rect x="1500.0" y="464.5" width="1" height="10"/><rect x="1495.5" y="469.0" width="10" height="1"/><path d="M1500.5 462.7l3 3.3h-6zM1500.5 476.3l3 -3.3h-6zM1493.7 469.5l3.3 -3v6zM1507.3 469.5l-3.3 -3v6z"/></g><g fill="none" stroke="#2a2a2e" stroke-width="1.25" stroke-linecap="round" stroke-dasharray="1.7 1.0"><path d="M1518.6 466.5H1517C1514.4 466.6 1514 468.6 1514.3 470.2C1514.5 471 1515 471.5 1515.6 471.9"/><path d="M1525.3 467.2C1527.2 468.3 1527.2 470.6 1525.4 471.6C1524.5 472.3 1523.5 472.7 1522 472.7"/></g><path d="M1519 464.1L1522 466.4L1519 468.7z" fill="#2a2a2e"/><path d="M1521.8 470.4L1518.9 472.7L1521.8 475z" fill="#2a2a2e"/><circle cx="1539.05" cy="468.1" r="4.55" fill="none" stroke="#e4e4e4" stroke-width="1.15"/><path d="M1542.2 471.2l4.1 4.1" stroke="#e0e0e0" stroke-width="2.1" fill="none"/><rect x="1555.5" y="464.5" width="10" height="10" fill="none" stroke="#e2e2e2" stroke-width="1" shape-rendering="crispEdges"/><path d="M1556.2 467.2H1563V473.8z" fill="#d6d6d6"/></svg>
</body></html>
